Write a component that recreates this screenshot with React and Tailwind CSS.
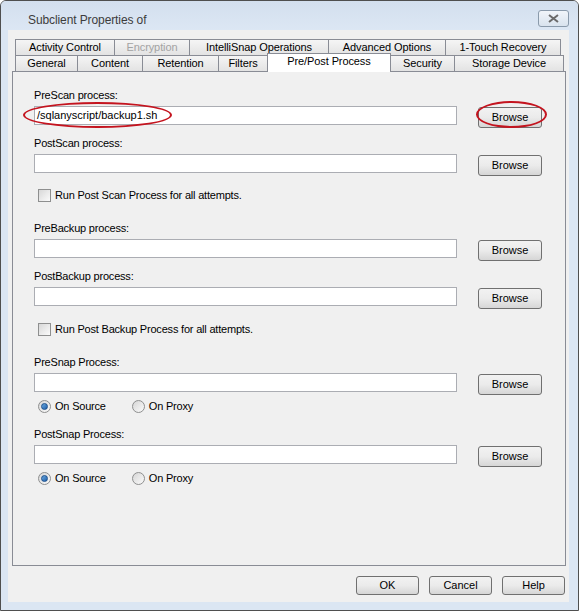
import React from 'react';

const font = { fontFamily: '"Liberation Sans", Arial, sans-serif' };

const Tab = ({ w, children, disabled }) => (
  <div
    className={`h-full flex items-center justify-center border border-[#898c95] border-b-0 -ml-px first:ml-0 bg-gradient-to-b from-[#f5f5f5] to-[#e3e3e3] text-[11px] tracking-[-0.1px] ${disabled ? 'text-[#a3a3a3]' : 'text-black'}`}
    style={{ width: w }}
  >
    {children}
  </div>
);

const Browse = ({ circled }) => (
  <div className="relative">
    <button className="w-[64px] h-[21px] rounded-[3px] border border-[#707070] bg-gradient-to-b from-[#f2f2f2] via-[#ebebeb] to-[#d6d6d6] text-[11px] text-black leading-none">
      Browse
    </button>
    {circled && (
      <div className="absolute left-[-2px] top-[-3px] w-[71px] h-[27px] rounded-[50%] border-2 border-[#c4141f]" />
    )}
  </div>
);

const Field = ({ label, value, circled, className = '' }) => (
  <div className={className}>
    <div className="h-[13px] leading-[13px] text-[11px] tracking-[-0.2px] text-black">{label}</div>
    <div className="mt-[3px] flex items-center h-[21px]">
      <div className="relative w-[423px] h-[19px] bg-white border border-[#abadb3] flex items-center pl-[2px] text-[11px] text-black">
        {value}
        {circled && (
          <div className="absolute left-[-12px] top-[-5px] w-[149px] h-[26px] rounded-[50%] border-2 border-[#c4141f]" />
        )}
      </div>
      <div className="ml-[21px]">
        <Browse circled={circled} />
      </div>
    </div>
  </div>
);

const Check = ({ label, className = '' }) => (
  <div className={`flex items-center h-[13px] pl-[4px] ${className}`}>
    <div className="w-[13px] h-[13px] border border-[#8e8f8f] bg-gradient-to-br from-[#d8d8d8] to-[#fbfbfb]" />
    <span className="ml-[4px] text-[11px] tracking-[-0.2px] text-black leading-none">{label}</span>
  </div>
);

const Radio = ({ checked }) => (
  <div className="w-[13px] h-[13px] rounded-full border border-[#8e8f8f] bg-gradient-to-br from-[#d6d6d6] to-[#fbfbfb] flex items-center justify-center">
    {checked && <div className="w-[7px] h-[7px] rounded-full bg-gradient-to-br from-[#6aa9e0] to-[#1d5ea8] border border-[#1b4f8c]" />}
  </div>
);

const Radios = ({ className = '' }) => (
  <div className={`flex items-center h-[13px] pl-[4px] text-[11px] tracking-[-0.2px] text-black ${className}`}>
    <Radio checked />
    <span className="ml-[4px] leading-none">On Source</span>
    <div className="ml-[26px]">
      <Radio />
    </div>
    <span className="ml-[4px] leading-none">On Proxy</span>
  </div>
);

const DlgButton = ({ children }) => (
  <button className="w-[63px] h-[19px] rounded-[3px] border border-[#707070] bg-gradient-to-b from-[#f2f2f2] via-[#ebebeb] to-[#d6d6d6] text-[11px] text-black leading-none">
    {children}
  </button>
);

export default function App() {
  return (
    <div style={font} className="w-[579px] h-[611px] bg-[#dbe6f3] border border-[#4f4f4f] rounded-t-[6px] flex flex-col overflow-hidden">
      {/* Title bar */}
      <div className="h-[29px] shrink-0 flex items-center bg-gradient-to-b from-[#d3dfee] to-[#dce7f4] relative">
        <span className="ml-[27px] mt-[8px] text-[12px] tracking-[-0.1px] text-[#3c3c3c]">Subclient Properties of</span>
        <div className="absolute left-[537px] top-[9px] w-[31px] h-[17px] rounded-[3px] border border-[#8a9aab] bg-gradient-to-b from-[#f1f5fa] to-[#d9e3ee] flex items-center justify-center">
          <svg width="11" height="9" viewBox="0 0 11 9">
            <path d="M1 1 L10 8 M10 1 L1 8" stroke="#6b6b6b" strokeWidth="2" />
          </svg>
        </div>
      </div>

      {/* Client area */}
      <div className="ml-[7px] mr-[9px] h-[572px] bg-[#f0f0f0] flex flex-col pl-[4px]">
        {/* Tabs */}
        <div className="mt-[9px] ml-[3px] flex h-[16px]">
          <Tab w={100}>Activity Control</Tab>
          <Tab w={76} disabled>Encryption</Tab>
          <Tab w={140}>IntelliSnap Operations</Tab>
          <Tab w={118}>Advanced Options</Tab>
          <Tab w={116}>1-Touch Recovery</Tab>
        </div>
        <div className="ml-[3px] flex h-[16px] relative z-10">
          <Tab w={63}>General</Tab>
          <Tab w={66}>Content</Tab>
          <Tab w={77}>Retention</Tab>
          <Tab w={50}>Filters</Tab>
          <div className="w-[124px] h-[19px] -mt-[2px] -ml-px bg-white border border-[#898c95] border-b-0 flex items-start justify-center pt-[1px] leading-[13px] text-[11px] tracking-[-0.1px] text-black relative z-10">
            Pre/Post Process
          </div>
          <Tab w={65}>Security</Tab>
          <Tab w={110}>Storage Device</Tab>
        </div>

        {/* Panel */}
        <div className="w-[554px] h-[495px] border border-[#898c95] bg-[#f0f0f0] pl-[21px] pt-[17px] flex flex-col">
          <Field label="PreScan process:" value="/sqlanyscript/backup1.sh" circled />
          <Field label="PostScan process:" className="mt-[11px]" />
          <Check label="Run Post Scan Process for all attempts." className="mt-[15px]" />
          <Field label="PreBackup process:" className="mt-[20px]" />
          <Field label="PostBackup process:" className="mt-[11px]" />
          <Check label="Run Post Backup Process for all attempts." className="mt-[16px]" />
          <Field label="PreSnap Process:" className="mt-[20px]" />
          <Radios className="mt-[7px]" />
          <Field label="PostSnap Process:" className="mt-[15px]" />
          <Radios className="mt-[7px]" />
        </div>

        {/* Footer */}
        <div className="mt-[10px] flex justify-end gap-[10px] pr-[4px]">
          <DlgButton>OK</DlgButton>
          <DlgButton>Cancel</DlgButton>
          <DlgButton>Help</DlgButton>
        </div>
      </div>
    </div>
  );
}
